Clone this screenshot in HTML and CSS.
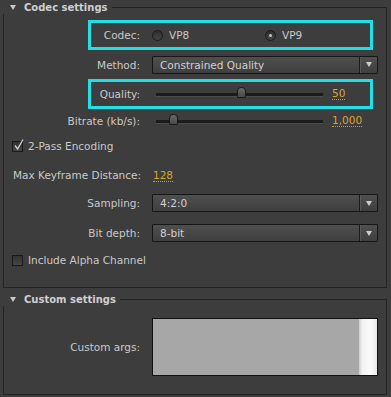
FILE: index.html
```html
<!DOCTYPE html>
<html>
<head>
<meta charset="utf-8">
<link rel="stylesheet" href="styles.css">
</head>
<body>
<div class="panel">
  <section class="group">
    <div class="group-head"><span class="tri"></span><span class="title">Codec settings</span><span class="head-line"></span></div>
    <div class="group-body fields codec-fields">
      <div class="row hl">
        <span class="label">Codec:</span>
        <div class="radios">
          <span class="radio"><span class="dot"></span>VP8</span>
          <span class="radio on"><span class="dot"></span>VP9</span>
        </div>
      </div>
      <div class="row">
        <span class="label">Method:</span>
        <div class="select"><span class="select-text">Constrained Quality</span><span class="select-arrow"></span></div>
      </div>
      <div class="row hl">
        <span class="label">Quality:</span>
        <div class="slider"><div class="track"><span class="knob" style="left:51%"></span></div><span class="val">50</span></div>
      </div>
      <div class="row">
        <span class="label">Bitrate (kb/s):</span>
        <div class="slider"><div class="track"><span class="knob" style="left:10.5%"></span></div><span class="val">1,000</span></div>
      </div>
      <div class="row row-check">
        <span class="check on"><svg width="14" height="14" viewBox="0 0 14 14"><path d="M3 7.5 L5.6 11 L11 1.5" fill="none" stroke="#d0d0d0" stroke-width="1.3"/></svg></span>
        <span>2-Pass Encoding</span>
      </div>
      <div class="row row-free">
        <span class="label">Max Keyframe Distance:</span>
        <span><span class="val">128</span></span>
      </div>
      <div class="row">
        <span class="label">Sampling:</span>
        <div class="select"><span class="select-text">4:2:0</span><span class="select-arrow"></span></div>
      </div>
      <div class="row">
        <span class="label">Bit depth:</span>
        <div class="select"><span class="select-text">8-bit</span><span class="select-arrow"></span></div>
      </div>
      <div class="row row-check">
        <span class="check"></span>
        <span>Include Alpha Channel</span>
      </div>
    </div>
  </section>
  <section class="group custom">
    <div class="group-head"><span class="tri"></span><span class="title">Custom settings</span><span class="head-line"></span></div>
    <div class="group-body custom-fields">
      <div class="row">
        <span class="label">Custom args:</span>
        <div class="textarea"><span class="ta-scroll"></span></div>
      </div>
    </div>
  </section>
</div>
</body>
</html>
```

FILE: styles.css
```css
* { box-sizing: border-box; }
html, body { margin: 0; }
body {
  background: #3d3d3d;
  width: 391px;
  height: 397px;
  overflow: hidden;
  font-family: "DejaVu Sans", "Lucida Grande", sans-serif;
  font-size: 10.5px;
  color: #c9c9c9;
}
.panel { padding: 0 4px 0 3px; }

.group-head {
  display: flex;
  align-items: center;
  height: 14px;
}
.tri {
  width: 0;
  height: 0;
  border-left: 3.5px solid transparent;
  border-right: 3.5px solid transparent;
  border-top: 5px solid #c8c8c8;
  margin-left: 7px;
}
.title {
  font-weight: bold;
  font-size: 10px;
  margin-left: 8px;
  padding-right: 4px;
  color: #cfcfcf;
}
.head-line {
  flex: 1;
  align-self: flex-end;
  height: 7px;
  border-top: 1px solid #242424;
  border-right: 1px solid #242424;
}
.group-body {
  border: 1px solid #242424;
  border-top: none;
}
.fields {
  display: grid;
  grid-template-rows: 30px 29px 30px 24px 26px 32px 24px 36px 18px;
  padding: 6px 8px 18px 0;
}
.row {
  position: relative;
  display: grid;
  grid-template-columns: 136px 1fr;
  column-gap: 12px;
  align-items: center;
}
.label { text-align: right; white-space: nowrap; }
.hl::after {
  content: "";
  position: absolute;
  left: 84px;
  right: 5px;
  top: 0;
  bottom: 0;
  border: 3px solid #22dfe6;
  pointer-events: none;
}

.radios { display: grid; grid-template-columns: 113px 1fr; }
.radio { display: flex; align-items: center; gap: 6px; }
.dot {
  width: 11px;
  height: 11px;
  border-radius: 50%;
  border: 1px solid #1a1a1a;
  background: linear-gradient(#2e2e2e, #444);
  display: grid;
  place-items: center;
}
.radio.on .dot::after {
  content: "";
  width: 3px;
  height: 3px;
  border-radius: 50%;
  background: #c4c4c4;
}

.select {
  display: flex;
  height: 18px;
  border: 1px solid #161616;
  border-radius: 1px;
  background: linear-gradient(#4f4f4f, #3f3f3f);
}
.select-text { flex: 1; padding-left: 7px; line-height: 16px; color: #d0d0d0; }
.select-arrow {
  width: 18px;
  border-left: 1px solid #1b1b1b;
  box-shadow: inset 1px 0 0 #595959;
  display: flex;
  align-items: center;
  justify-content: center;
}
.select-arrow::before {
  content: "";
  border-left: 3.5px solid transparent;
  border-right: 3.5px solid transparent;
  border-top: 5px solid #cfcfcf;
}

.slider { display: flex; align-items: center; }
.track {
  position: relative;
  width: 167px;
  height: 3px;
  margin-left: 4px;
  background: #1b1b1b;
  box-shadow: 0 1px 0 #4c4c4c;
}
.knob {
  position: absolute;
  top: -6px;
  width: 9px;
  height: 11px;
  margin-left: -4.5px;
  border: 1px solid #1a1a1a;
  border-radius: 4px 4px 1px 1px;
  background: linear-gradient(#6a6a6a, #484848);
}
.val {
  margin-left: 9px;
  color: #d6a82c;
  border-bottom: 1px dotted #c9a030;
  line-height: 11px;
}
.row-free .val { margin-left: 1px; }
.row-free .label { text-align: left; padding-left: 9px; }

.row-check {
  display: flex;
  align-items: center;
  gap: 5px;
  padding-left: 8px;
}
.check {
  position: relative;
  width: 11px;
  height: 11px;
  border: 1px solid #1a1a1a;
  background: linear-gradient(#333, #444);
}
.check svg { position: absolute; left: -1px; top: -4px; }

.custom { margin-top: 4px; }
.custom-fields { padding: 12px 8px 18px 0; }
.textarea {
  height: 58px;
  display: flex;
  border: 1px solid #111;
  background: #a7a7a7;
}
.ta-scroll {
  width: 18px;
  margin-left: auto;
  background: linear-gradient(90deg, #cacaca, #f2f2f2 3px, #fbfbfb 12px, #e8e8e8);
}
```
